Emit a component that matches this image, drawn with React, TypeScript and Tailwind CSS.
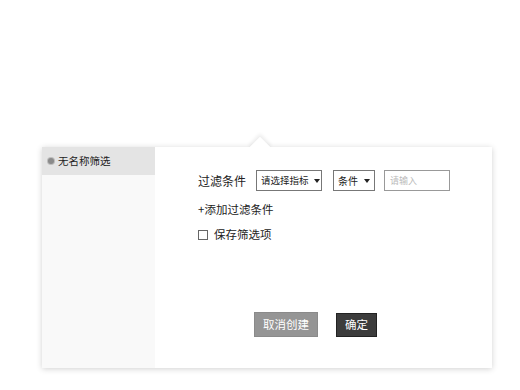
import React from 'react';

function Caret() {
  return <span className="ml-[5px] inline-block w-0 h-0 border-l-[3px] border-r-[3px] border-t-[4px] border-l-transparent border-r-transparent border-t-[#222]" />;
}

export default function App() {
  return (
    <div
      className="w-[520px] h-[390px] bg-white overflow-hidden pt-[147px] pl-[42px] text-[#222]"
      style={{ fontFamily: '"Noto Sans CJK SC", "Noto Sans", sans-serif' }}
    >
      <div className="relative w-[450px] h-[221px] flex bg-white shadow-[0_1px_6px_rgba(0,0,0,0.18)]">
        {/* arrow */}
        <div className="absolute left-[210px] top-[-7px] w-[16px] h-[16px] rotate-45 bg-white shadow-[-2px_-2px_4px_rgba(0,0,0,0.08)]" />
        <div className="absolute left-[200px] top-0 w-[40px] h-[12px] bg-white" />

        <aside className="w-[113px] bg-[#f9f9f9] relative">
          <div className="h-[28px] bg-[#e4e4e4] flex items-center pl-[6px] gap-[4px] text-[10.5px]">
            <span className="w-[6px] h-[6px] rounded-full bg-[#8a8a8a] ring-1 ring-[#bcbcbc]" />
            <span>无名称筛选</span>
          </div>
        </aside>

        <main className="flex-1 relative pl-[43px] pt-[23px]">
          <div className="flex items-center h-[21px] text-[9.5px] whitespace-nowrap">
            <span className="text-[12px] w-[58px]">过滤条件</span>
            <div className="w-[66px] h-[21px] border border-[#777] flex items-center pl-[4px]">
              请选择指标<Caret />
            </div>
            <div className="ml-[11px] w-[42px] h-[21px] border border-[#777] flex items-center pl-[4px]">
              <span className="text-[10px]">条件</span>
              <span className="ml-[6px] inline-block w-0 h-0 border-l-[3px] border-r-[3px] border-t-[4px] border-l-transparent border-r-transparent border-t-[#222]" />
            </div>
            <div className="ml-[9px] w-[66px] h-[21px] border border-[#999] flex items-center pl-[5px] text-[#bbb] text-[9px]">
              请输入
            </div>
          </div>
          <div className="mt-[10px] text-[11.5px]">+添加过滤条件</div>
          <div className="mt-[8px] flex items-center text-[11.5px]">
            <span className="w-[10px] h-[10px] border border-[#666] mr-[6px]" />
            保存筛选项
          </div>

          <div className="absolute left-[99px] top-[165px] flex items-center gap-[18px] text-[11.5px]">
            <button className="w-[64px] h-[25px] bg-[#959595] text-white border border-[#8a8a8a]">取消创建</button>
            <button className="w-[41px] h-[24px] bg-[#3c3c3c] text-white border border-[#222]">确定</button>
          </div>
        </main>
      </div>
    </div>
  );
}
